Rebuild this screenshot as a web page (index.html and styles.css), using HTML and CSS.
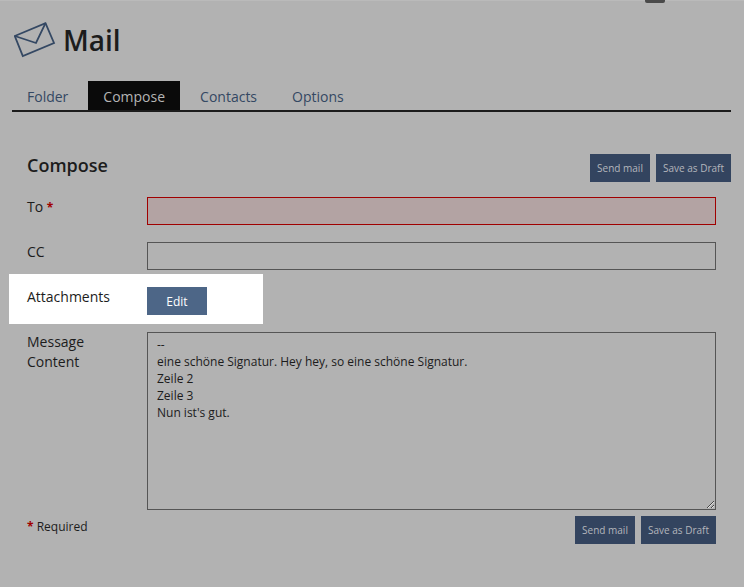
FILE: index.html
```html
<!DOCTYPE html>
<html lang="en">
<head>
    <meta charset="UTF-8">
    <meta name="viewport" content="width=device-width, initial-scale=1.0">
    <title>Mail</title>
    <link rel="stylesheet" href="styles.css">
</head>
<body>
    <div class="top-handle"></div>

    <div class="header">
        <svg class="mail-icon" width="44" height="38" viewBox="0 0 44 38" fill="none" stroke="#344863" stroke-width="1.8">
            <path d="M.8 15 31.5 2.2 40 22 8.8 35Z"/>
            <path d="M.8 15 22 22 31.5 2.2"/>
        </svg>
        <h1>Mail</h1>
    </div>

    <div class="tabs">
        <a class="tab">Folder</a>
        <a class="tab active">Compose</a>
        <a class="tab">Contacts</a>
        <a class="tab">Options</a>
    </div>

    <div class="title-row">
        <h2>Compose</h2>
        <div class="buttons">
            <button class="btn">Send mail</button>
            <button class="btn">Save as Draft</button>
        </div>
    </div>

    <form class="form">
        <div class="row row-to">
            <label>To <span class="req">*</span></label>
            <input type="text" class="field error">
        </div>
        <div class="row row-cc">
            <label>CC</label>
            <input type="text" class="field">
        </div>
        <div class="row row-attach">
            <label>Attachments</label>
            <button type="button" class="btn btn-edit">Edit</button>
        </div>
        <div class="row row-message">
            <label>Message<br>Content</label>
            <textarea class="field message">--
eine schöne Signatur. Hey hey, so eine schöne Signatur.
Zeile 2
Zeile 3
Nun ist's gut.</textarea>
        </div>
        <div class="form-footer">
            <div class="required"><span class="req">*</span> Required</div>
            <div class="buttons">
                <button type="button" class="btn">Send mail</button>
                <button type="button" class="btn">Save as Draft</button>
            </div>
        </div>
    </form>
</body>
</html>
```

FILE: styles.css
```css
* {
    box-sizing: border-box;
}

body {
    font-family: "Open Sans", Arial, sans-serif;
    color: #1c1c1c;
    background: #b2b2b2;
    margin: 0;
    padding: 21px 13px 0 12px;
    height: 587px;
    overflow: hidden;
    border-top: 1px solid #bababa;
}

.top-handle {
    position: absolute;
    top: 0;
    left: 645px;
    width: 20px;
    height: 3px;
    border-radius: 0 0 2px 2px;
    background: #4a4a4a;
}

.header {
    display: flex;
    align-items: center;
    height: 36px;
    padding-left: 2px;
}

.mail-icon {
    flex: none;
}

h1 {
    margin: 0 0 0 5px;
    font-size: 28px;
    line-height: 36px;
    font-weight: 600;
}

.tabs {
    display: flex;
    margin-top: 23px;
    border-bottom: 2px solid #1c1c1c;
    height: 31px;
}

.tab {
    padding: 0 15px;
    font-size: 14px;
    line-height: 31px;
    color: #344863;
    height: 29px;
    margin-right: 5px;
}

.tab.active {
    background: #0a0a0a;
    color: #b5b5b5;
}

.title-row {
    display: flex;
    justify-content: space-between;
    margin-top: 42px;
    padding-left: 15px;
}

h2 {
    margin: 0;
    font-size: 18px;
    line-height: 22px;
    font-weight: 600;
}

.buttons {
    display: flex;
    gap: 6px;
}

.btn {
    height: 28px;
    min-width: 60px;
    padding: 0 7px;
    border: none;
    background: #33445f;
    color: #b3b6bc;
    font-family: inherit;
    font-size: 10px;
}

.form {
    padding: 0 15px;
}

.row {
    display: flex;
}

.row label {
    width: 120px;
    flex: none;
    font-size: 14px;
    line-height: 20px;
}

.req {
    color: #a00000;
    font-weight: 700;
    font-size: 12px;
}

.field {
    width: 569px;
    height: 28px;
    border: 1px solid #555;
    background: transparent;
    border-radius: 0;
    outline: none;
    display: block;
}

.field.error {
    border-color: #a00000;
    background: #b3a3a3;
}

.row-to {
    margin-top: 15px;
}

.row-cc {
    margin-top: 17px;
}

.row-attach {
    margin: 4px 0 0 -18px;
    width: 254px;
    height: 50px;
    padding: 13px 0 0 18px;
    background: #fff;
}

.btn-edit {
    width: 60px;
    background: #4d6687;
    color: #fff;
    font-size: 12px;
}

.row-message {
    margin-top: 8px;
}

.message {
    height: 178px;
    padding: 3px 9px;
    font-family: inherit;
    font-size: 12px;
    line-height: 17px;
    color: #1c1c1c;
}

.form-footer {
    display: flex;
    justify-content: space-between;
    margin-top: 6px;
}

.required {
    font-size: 12px;
    line-height: 22px;
}
```
